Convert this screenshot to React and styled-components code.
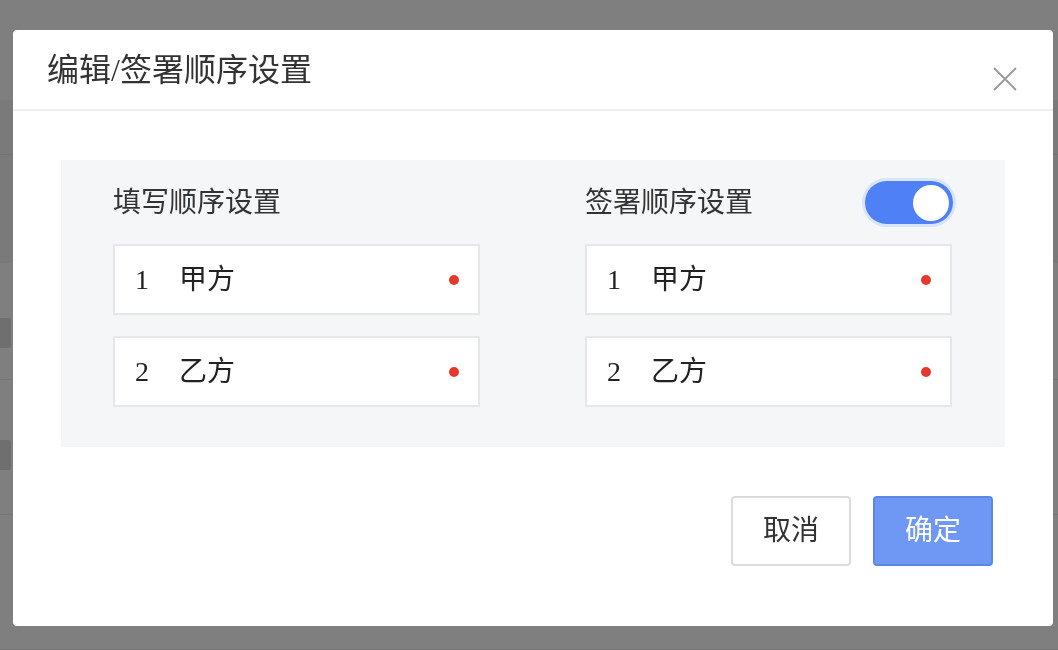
import React from "react";
import styled, { createGlobalStyle } from "styled-components";

const GlobalStyle = createGlobalStyle`
  html, body { margin: 0; padding: 0; }
  body {
    font-family: "Liberation Serif", "Noto Sans CJK SC", serif;
    color: #333;
    background: #fff;
  }
  * { box-sizing: border-box; }
`;

/* ---------- underlying page (dimmed) ---------- */
const Page = styled.div`
  width: 1058px;
  height: 650px;
  display: flex;
  flex-direction: column;
  background: #fff;
  overflow: hidden;
`;

const PageTop = styled.div`
  height: 100px;
  background: #fff;
`;

const PageHead = styled.div`
  height: 163px;
  background: #f5f5f5;
  display: flex;
  flex-direction: column;
`;

const HeadLine = styled.div`
  height: 55px;
  border-bottom: 1px solid #e8e8e8;
`;

const PageRow = styled.div`
  height: ${(p) => p.$h}px;
  border-bottom: 1px solid #ececec;
  padding-top: ${(p) => p.$offset}px;
  display: flex;
`;

const RowChip = styled.div`
  width: 11px;
  height: 30px;
  background: #dedede;
  border-radius: 0 2px 2px 0;
`;

/* ---------- overlay + modal ---------- */
const Backdrop = styled.div`
  position: fixed;
  inset: 0;
  background: rgba(0, 0, 0, 0.5);
  display: flex;
  align-items: flex-start;
  padding: 30px 0 0 13px;
`;

const Modal = styled.div`
  width: 1040px;
  height: 596px;
  background: #fff;
  border-radius: 4px;
  display: flex;
  flex-direction: column;
  overflow: hidden;
`;

const Header = styled.div`
  height: 81px;
  flex: none;
  display: flex;
  align-items: center;
  justify-content: space-between;
  padding: 0 36px 0 34px;
  border-bottom: 2px solid #eeeeee;
`;

const Title = styled.h2`
  margin: 0;
  font-size: 32px;
  font-weight: 400;
  line-height: 1;
  color: #333;
`;

const CloseButton = styled.button`
  border: none;
  background: transparent;
  padding: 0;
  margin-top: 18px;
  width: 24px;
  height: 24px;
  display: flex;
  cursor: pointer;
`;

const Body = styled.div`
  padding: 49px 48px 0;
`;

const Panel = styled.div`
  background: #f5f6f8;
  height: 287px;
  padding: 21px 53px 40px 52px;
  display: grid;
  grid-template-columns: 367px 367px;
  justify-content: space-between;
`;

const Column = styled.div`
  display: flex;
  flex-direction: column;
`;

const ColumnHead = styled.div`
  height: 43px;
  display: flex;
  align-items: center;
  justify-content: space-between;
  margin-bottom: 20px;
`;

const ColumnTitle = styled.h3`
  margin: 0;
  font-size: 28px;
  font-weight: 400;
  line-height: 1;
  color: #333;
`;

const Toggle = styled.div`
  width: 88px;
  height: 43px;
  border-radius: 22px;
  background: #4f80f6;
  box-shadow: 0 0 0 3px #d9e4fd;
  padding: 4px;
  display: flex;
  justify-content: ${(p) => (p.$on ? "flex-end" : "flex-start")};
  margin-right: -1px;
`;

const Knob = styled.div`
  width: 36px;
  height: 36px;
  border-radius: 50%;
  background: #fff;
`;

const List = styled.div`
  display: flex;
  flex-direction: column;
  gap: 21px;
`;

const Item = styled.div`
  height: 71px;
  background: #fff;
  border: 2px solid #e6e7ea;
  display: flex;
  align-items: center;
  padding: 0 19px 0 20px;
`;

const Index = styled.span`
  width: 44px;
  font-size: 28px;
  line-height: 1;
  color: #222;
`;

const Name = styled.span`
  flex: 1;
  font-size: 28px;
  line-height: 1;
  color: #222;
`;

const Dot = styled.span`
  width: 10px;
  height: 10px;
  border-radius: 50%;
  background: #e6392e;
`;

const Footer = styled.div`
  display: flex;
  justify-content: flex-end;
  gap: 22px;
  padding: 49px 60px 0;
`;

const Button = styled.button`
  width: 120px;
  height: 70px;
  border-radius: 4px;
  font-family: "Liberation Serif", "Noto Sans CJK SC", serif;
  font-size: 28px;
  line-height: 1;
  cursor: pointer;
  border: 2px solid ${(p) => (p.$primary ? "#5d86e9" : "#dcdcdc")};
  background: ${(p) => (p.$primary ? "#6f98f5" : "#fff")};
  color: ${(p) => (p.$primary ? "#fff" : "#333")};
`;

const parties = [
  { n: 1, name: "甲方" },
  { n: 2, name: "乙方" },
];

function PartyList() {
  return (
    <List>
      {parties.map((p) => (
        <Item key={p.n}>
          <Index>{p.n}</Index>
          <Name>{p.name}</Name>
          <Dot />
        </Item>
      ))}
    </List>
  );
}

export default function App() {
  return (
    <>
      <GlobalStyle />
      <Page>
        <PageTop />
        <PageHead>
          <HeadLine />
        </PageHead>
        <PageRow $h={117} $offset={55}>
          <RowChip />
        </PageRow>
        <PageRow $h={135} $offset={60}>
          <RowChip />
        </PageRow>
        <PageRow $h={135} $offset={0} />
      </Page>
      <Backdrop>
        <Modal>
          <Header>
            <Title>编辑/签署顺序设置</Title>
            <CloseButton aria-label="关闭">
              <svg width="24" height="24" viewBox="0 0 24 24">
                <path
                  d="M1 1 L23 23 M23 1 L1 23"
                  stroke="#9a9a9a"
                  strokeWidth="1.8"
                  fill="none"
                />
              </svg>
            </CloseButton>
          </Header>
          <Body>
            <Panel>
              <Column>
                <ColumnHead>
                  <ColumnTitle>填写顺序设置</ColumnTitle>
                </ColumnHead>
                <PartyList />
              </Column>
              <Column>
                <ColumnHead>
                  <ColumnTitle>签署顺序设置</ColumnTitle>
                  <Toggle $on>
                    <Knob />
                  </Toggle>
                </ColumnHead>
                <PartyList />
              </Column>
            </Panel>
          </Body>
          <Footer>
            <Button>取消</Button>
            <Button $primary>确定</Button>
          </Footer>
        </Modal>
      </Backdrop>
    </>
  );
}
